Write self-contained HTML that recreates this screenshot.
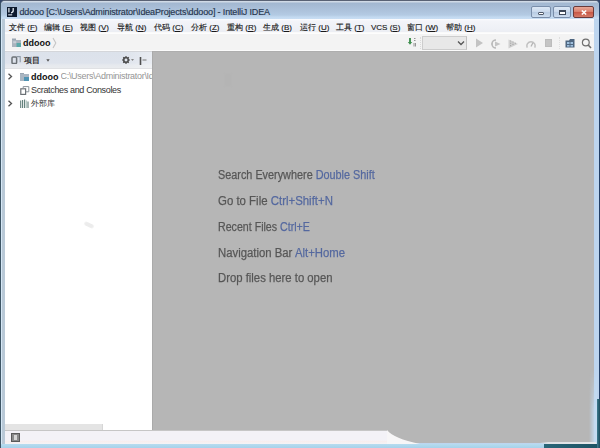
<!DOCTYPE html>
<html><head><meta charset="utf-8">
<style>
*{margin:0;padding:0;box-sizing:border-box}
html,body{width:600px;height:448px;overflow:hidden;background:#34466a;font-family:"Liberation Sans",sans-serif;position:relative}
.a{position:absolute}
#outer{left:0;top:0;width:600px;height:448px;border:1px solid #3e5565;border-top-color:#596274;border-right-color:#233f66;border-bottom:none;border-radius:5px 5px 0 0;background:linear-gradient(90deg,#d6e8f6 0,#d6e8f6 1px,#b9c9d7 1px,#b9c9d7 4px,#c4d2de 5px,#bdd5ef 5px,#bdd5ef 100%)}
#tbar{left:1px;top:1px;width:598px;height:18px;border-radius:4px 4px 0 0;background:linear-gradient(#d0dae6 0,#d0dae6 1px,#a2b7d0 2px,#a8bdd6 6px,#b3cae3 14px,#c2d9f0 16px,#c8def3 18px)}
#icon{left:7px;top:7px;width:9.5px;height:9.5px;background:#0d1a2e}
#title{left:19.5px;top:6px;font-size:9px;color:#26364e;white-space:nowrap;letter-spacing:-0.15px;line-height:12px;-webkit-text-stroke:0.15px #26364e}
.wb{top:6px;height:11.5px;border:1px solid #7a8eaa;border-radius:2px;background:linear-gradient(#dde8f5,#cad9ec 45%,#b9cce3 55%,#cddcee)}
#menubar{left:5px;top:19px;width:589px;height:14px;background:linear-gradient(#fbfcfe 0,#f3f4f9 2px,#eef0f6 10px,#eceef3 13px,#fafafa 13px);font-size:8px;color:#1a1a1a;white-space:nowrap;-webkit-text-stroke:0.15px #1a1a1a}
.mi{position:absolute;top:2.5px;line-height:11px}
#nav{left:5px;top:33px;width:589px;height:18px;background:#f3f3f3;border-top:1px solid #fdfdfd;border-bottom:1px solid #fbfbfb}
#twh{left:5px;top:51px;width:147px;height:18px;border-top:1px solid #d4d6da;border-bottom:1px solid #e0e1e4;background:linear-gradient(90deg,rgba(255,255,255,0) 78%,rgba(255,255,255,.35)),linear-gradient(#dce2eb 0,#dee3ec 11px,#e6e9ee 13px,#e9ebee 16px)}
#tree{left:5px;top:69px;width:147px;height:361px;background:#fff}
#editor{left:152px;top:51px;width:441.5px;height:392px;background:#b6b6b6;border-top:1px solid #aeaeae;border-left:1px solid #aaaaaa}
#status{left:5px;top:430px;width:382px;height:14px;background:linear-gradient(#f3f2f7 0,#f3f2f7 70%,#f7eeee 80%,#f4f3f6);border-top:1px solid #c6c6c6}
.hint{position:absolute;left:218px;font-size:12px;color:#555;white-space:nowrap;line-height:13px;transform-origin:0 0;-webkit-text-stroke:0.25px #5a5a5a}
.hint span{color:#5267a0;-webkit-text-stroke-color:#5a6c9e}
.tr{position:absolute;font-size:9px;white-space:nowrap;line-height:11px;color:#333;letter-spacing:-0.3px}
</style></head><body>
<div id="outer" class="a"></div>
<div id="tbar" class="a"></div>
<div id="icon" class="a"><svg width="9.5" height="9.5" viewBox="0 0 9.5 9.5" style="display:block"><path d="M1.9 1v4.6" stroke="#e8eef4" stroke-width="1.2" fill="none"/><path d="M6.2 1v2.6q0 2-2.2 2.2" stroke="#e8eef4" stroke-width="1.3" fill="none"/><rect x="1.2" y="7.3" width="4" height="1.1" fill="#dfe6ee"/></svg></div>
<div id="title" class="a">ddooo [C:\Users\Administrator\IdeaProjects\ddooo] - IntelliJ IDEA</div>
<div class="a wb" style="left:531px;width:19.5px"><div class="a" style="left:5.5px;top:4.5px;width:6.5px;height:3px;background:#fff;border:1px solid #505a6a;border-radius:1px"></div></div>
<div class="a wb" style="left:552.5px;width:18.5px"><div class="a" style="left:5.5px;top:2.5px;width:7px;height:5.5px;background:#fff;border:1px solid #3e4858;border-top-width:2px"></div></div>
<div class="a wb" style="left:573px;width:21px;border-color:#6a3a3a;background:linear-gradient(#e8a898,#d9806e 45%,#c95a48 55%,#d47a68)"><svg class="a" style="left:7px;top:2.5px" width="6" height="5" viewBox="0 0 6 5"><path d="M0.8 0.5l4.4 4M5.2 0.5l-4.4 4" stroke="#fff" stroke-width="1.5"/></svg></div>

<div id="menubar" class="a">
<span class="mi" style="left:4px">文件 (<u>F</u>)</span>
<span class="mi" style="left:39px">编辑 (<u>E</u>)</span>
<span class="mi" style="left:75px">视图 (<u>V</u>)</span>
<span class="mi" style="left:112px">导航 (<u>N</u>)</span>
<span class="mi" style="left:149px">代码 (<u>C</u>)</span>
<span class="mi" style="left:186px">分析 (<u>Z</u>)</span>
<span class="mi" style="left:222px">重构 (<u>R</u>)</span>
<span class="mi" style="left:258px">生成 (<u>B</u>)</span>
<span class="mi" style="left:295px">运行 (<u>U</u>)</span>
<span class="mi" style="left:331px">工具 (<u>T</u>)</span>
<span class="mi" style="left:366px">VCS (<u>S</u>)</span>
<span class="mi" style="left:402px">窗口 (<u>W</u>)</span>
<span class="mi" style="left:441px">帮助 (<u>H</u>)</span>
</div>

<div id="nav" class="a"></div>
<!-- nav breadcrumb -->
<svg class="a" style="left:12px;top:38px" width="10" height="10" viewBox="0 0 10 10"><rect x="0" y="0.5" width="4" height="2" fill="#9aa6b2"/><rect x="0" y="2" width="9" height="7" fill="#aab4be"/><rect x="1.2" y="3.2" width="3" height="2" fill="#c9d0d8"/><rect x="4.5" y="5" width="4.5" height="4" fill="#5aa9a9"/></svg>
<div class="a" style="left:23px;top:37px;font-size:9px;font-weight:bold;color:#111;line-height:12px">ddooo</div>
<svg class="a" style="left:51.5px;top:36.5px" width="5" height="12" viewBox="0 0 5 12"><path d="M1 1l2.8 5-2.8 5" stroke="#c4c4c4" stroke-width="1.1" fill="none"/></svg>
<!-- right toolbar -->
<svg class="a" style="left:407px;top:37px" width="11" height="11" viewBox="0 0 11 11"><path d="M3 1v4.5" stroke="#3f8f4f" stroke-width="1.9"/><path d="M0.8 5h4.4l-2.2 2.8z" fill="#3f8f4f"/><path d="M7 1.5h1.5M7 3.5h1.5M7 6v3.5M8.5 6v3.5" stroke="#8a8a8a" stroke-width="0.9"/></svg>
<div class="a" style="left:420px;top:37px;width:1px;height:12px;border-left:1px dotted #dadada"></div>
<div class="a" style="left:422px;top:36px;width:44.5px;height:13.5px;background:#e8e8e8;border:1px solid #cdcdcd;border-right-color:#c2c2c2"></div>
<svg class="a" style="left:457px;top:40px" width="8" height="6" viewBox="0 0 8 6"><path d="M1 1.5l3 3 3-3" stroke="#555" stroke-width="1.3" fill="none"/></svg>
<svg class="a" style="left:475px;top:38px" width="9" height="10" viewBox="0 0 9 10"><path d="M1 0.5l7 4.5-7 4.5z" fill="#c3c3c3"/></svg>
<svg class="a" style="left:491px;top:38.5px" width="11" height="10" viewBox="0 0 11 10"><path d="M5 1A4 4 0 1 0 5 9" stroke="#b9b9b9" stroke-width="1.6" fill="none"/><path d="M4 2.5l5.5 2.5-5.5 2.5z" fill="#c4c4c4"/><path d="M0 5h2" stroke="#bbb"/></svg>
<svg class="a" style="left:508px;top:38.5px" width="11" height="10" viewBox="0 0 11 10"><path d="M0.5 0.5l9.5 4.5-9.5 4.5z" fill="#d0d0d0"/><path d="M2 2h1.2M4.4 3h1.2M2 4.2h1.2M4.4 5.4h1.2M2 6.6h1.2M6.8 4.2h1.2" stroke="#a9a9a9" stroke-width="1.1"/></svg>
<svg class="a" style="left:526px;top:38.5px" width="10" height="10" viewBox="0 0 10 10"><path d="M1.3 8.6A4.1 4.1 0 1 1 8.7 8.6" stroke="#c0c0c0" stroke-width="1.5" fill="none"/><path d="M5 7.5l1.8-3.5" stroke="#b4b4b4" stroke-width="1.3"/></svg>
<div class="a" style="left:544.5px;top:38.5px;width:7.5px;height:8px;background:#c4c4c4;border:1px solid #bcbcbc"></div>
<div class="a" style="left:559px;top:37px;width:1px;height:12px;border-left:1px dotted #dedede"></div>
<svg class="a" style="left:565px;top:38px" width="10" height="10" viewBox="0 0 10 10"><path d="M0.5 2.5h3.5l1-1.5h4.5v8.5h-9z" fill="#4e6680"/><rect x="2" y="4" width="2.5" height="2" fill="#9fc0de"/><rect x="5.5" y="4" width="2.5" height="2" fill="#9fc0de"/><rect x="2" y="7" width="2.5" height="1.6" fill="#9fc0de"/><rect x="5.5" y="7" width="2.5" height="1.6" fill="#9fc0de"/></svg>
<svg class="a" style="left:581px;top:38px" width="11" height="11" viewBox="0 0 11 11"><circle cx="4.8" cy="4.5" r="3.4" stroke="#6e6e6e" stroke-width="1.2" fill="none"/><path d="M7.2 7l2.8 3" stroke="#6e6e6e" stroke-width="1.6"/></svg>

<div id="twh" class="a"></div>
<svg class="a" style="left:11px;top:56px" width="10" height="8" viewBox="0 0 10 8"><rect x="1" y="1" width="4.6" height="6.6" rx="1" fill="none" stroke="#6b7176" stroke-width="1.5"/><path d="M5.5 0.6h3.7v5.6" stroke="#8e9aa6" stroke-width="1.1" fill="none"/></svg>
<div class="a" style="left:24px;top:54.5px;font-size:8px;color:#1a1a1a;line-height:11px;-webkit-text-stroke:0.2px #1a1a1a">项目</div>
<svg class="a" style="left:46px;top:59px" width="4" height="3" viewBox="0 0 4 3"><path d="M0.3 0.3h3.4l-1.7 2.4z" fill="#555"/></svg>
<svg class="a" style="left:121.5px;top:55.5px" width="8" height="8" viewBox="0 0 8 8"><circle cx="4" cy="4" r="2.3" fill="none" stroke="#505050" stroke-width="1.7"/><path d="M4 0v1.8M4 6.2v1.8M0 4h1.8M6.2 4h1.8M1.2 1.2l1.2 1.2M5.6 5.6l1.2 1.2M1.2 6.8l1.2-1.2M5.6 2.4l1.2-1.2" stroke="#505050" stroke-width="1.1"/></svg>
<svg class="a" style="left:131px;top:59px" width="3" height="2" viewBox="0 0 3 2"><path d="M0 0h3l-1.5 2z" fill="#888"/></svg>
<svg class="a" style="left:138.5px;top:56.5px" width="9" height="8" viewBox="0 0 9 8"><path d="M1.5 0v8" stroke="#505050" stroke-width="1.6"/><path d="M3.5 3h4" stroke="#8a8a8a" stroke-width="1.2"/></svg>

<div id="tree" class="a"></div>
<svg class="a" style="left:7px;top:73px" width="6" height="7" viewBox="0 0 6 7"><path d="M1.5 0.8l3 2.7-3 2.7" stroke="#555" stroke-width="1.3" fill="none"/></svg>
<svg class="a" style="left:20px;top:72px" width="10" height="10" viewBox="0 0 10 10"><rect x="0" y="1" width="4" height="2" fill="#9aa6b2"/><rect x="0" y="2" width="9" height="7" fill="#aab6c2"/><rect x="4" y="5" width="5" height="4" fill="#4f93b3"/></svg>
<div class="a" style="left:31px;top:71px;font-size:9px;font-weight:bold;color:#111;line-height:12px">ddooo</div>
<div class="a" style="left:60.5px;top:71px;font-size:9px;color:#959595;line-height:11px;white-space:nowrap;letter-spacing:-0.3px;width:92px;overflow:hidden">C:\Users\Administrator\IdeaProjects</div>
<svg class="a" style="left:20px;top:85.5px" width="10" height="9" viewBox="0 0 10 9"><rect x="0.8" y="2.8" width="4.8" height="5.6" fill="none" stroke="#6b7176" stroke-width="1.2"/><path d="M3.2 2.6v-2h5.6v5.2h-3" stroke="#8b939b" stroke-width="1" fill="none"/></svg>
<div class="a" style="left:31px;top:85px;font-size:9px;color:#333;line-height:11px;white-space:nowrap;letter-spacing:-0.35px">Scratches and Consoles</div>
<svg class="a" style="left:7px;top:100px" width="6" height="7" viewBox="0 0 6 7"><path d="M1.5 0.8l3 2.7-3 2.7" stroke="#555" stroke-width="1.3" fill="none"/></svg>
<svg class="a" style="left:20px;top:99px" width="10" height="10" viewBox="0 0 10 10"><path d="M0.7 1.5v7.5M2.6 1v8M4.6 0.5v8.5M8 2.5v6.5" stroke="#5e7d78" stroke-width="1.1"/><path d="M6.3 1.5v7.5" stroke="#9bb5b0" stroke-width="0.9"/></svg>
<div class="a" style="left:31px;top:98px;font-size:8px;color:#333;line-height:11px">外部库</div>
<!-- tree h-scrollbar -->
<div class="a" style="left:5px;top:424px;width:98px;height:6px;background:#e4e4e4;border-right:1px solid #d6d6d6"></div>

<div class="a" style="left:84px;top:223px;width:10px;height:4px;background:#ececec;border-radius:2px;transform:rotate(25deg);filter:blur(0.6px)"></div>
<div id="editor" class="a"></div>
<div class="a" style="left:224px;top:73px;width:8px;height:14px;background:#b0b0b0;filter:blur(1px);opacity:.25"></div>
<div class="hint" style="top:169px;transform:scaleX(0.904)">Search Everywhere <span>Double Shift</span></div>
<div class="hint" style="top:195px;transform:scaleX(0.952)">Go to File <span>Ctrl+Shift+N</span></div>
<div class="hint" style="top:221px;transform:scaleX(0.886)">Recent Files <span>Ctrl+E</span></div>
<div class="hint" style="top:246.6px;transform:scaleX(0.945)">Navigation Bar <span>Alt+Home</span></div>
<div class="hint" style="top:271.6px;transform:scaleX(0.943)">Drop files here to open</div>

<div id="status" class="a"></div>
<svg class="a" style="left:0;top:428px" width="600" height="20" viewBox="0 428 600 20"><path d="M387 430 C392 436 402 440 420 444 L387 444 Z" fill="#f7f6f7"/></svg>
<div class="a" style="left:11px;top:433px;width:9px;height:9px;background:#8a8a8a;border:1px solid #5a5a5a"><div class="a" style="left:2px;top:1px;width:3px;height:5px;background:#d6d6d6"></div></div>
<div class="a" style="left:1px;top:444px;width:544px;height:4px;background:linear-gradient(#b7dcef,#a6d2ea)"></div>
<div class="a" style="left:544px;top:444px;width:56px;height:4px;background:linear-gradient(90deg,#2a6678,#1d5364)"></div>
<div class="a" style="left:589px;top:370px;width:8px;height:74px;background:linear-gradient(90deg,rgba(190,214,235,0),#c3daf0 75%,#c8def2);-webkit-mask-image:linear-gradient(transparent,#000 40px)"></div>
<div class="a" style="left:540px;top:441.5px;width:56px;height:2.5px;background:linear-gradient(90deg,rgba(220,224,228,0),#dfe2e5 15%,#e6e8ea)"></div>
<div class="a" style="left:597px;top:399px;width:3px;height:49px;background:linear-gradient(90deg,#3f7c90,#1b4a5c)"></div>
</body></html>
